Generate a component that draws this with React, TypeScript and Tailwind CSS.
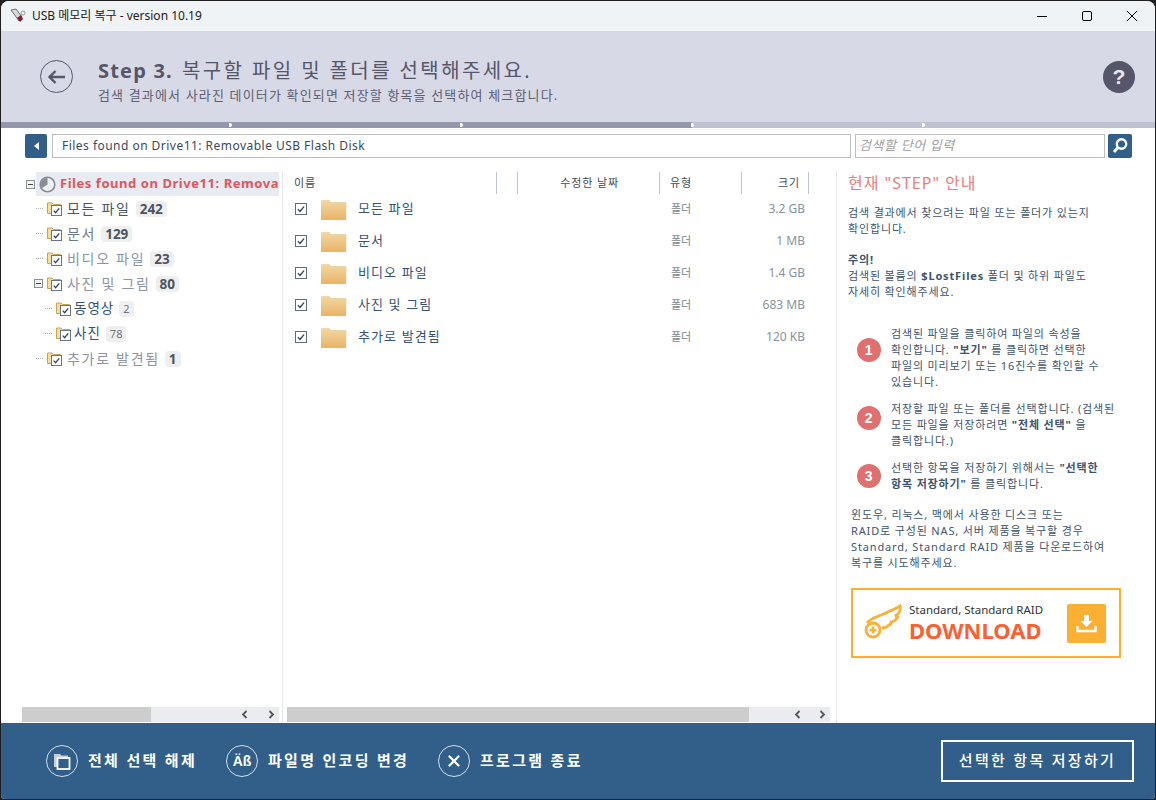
import { X } from "lucide-react";

const sans = "font-['Noto_Sans','Noto_Sans_CJK_KR',sans-serif]";

const treeRows = [
  { name: "모든 파일", count: "242", depth: 0, tone: "text-[#4b5563]" },
  { name: "문서", count: "129", depth: 0, tone: "text-[#6b7a8d]" },
  { name: "비디오 파일", count: "23", depth: 0, tone: "text-[#8795ab]" },
  { name: "사진 및 그림", count: "80", depth: 0, tone: "text-[#8d94a3]", open: true },
  { name: "동영상", count: "2", depth: 1, tone: "text-[#34527a]" },
  { name: "사진", count: "78", depth: 1, tone: "text-[#34527a]" },
  { name: "추가로 발견됨", count: "1", depth: 0, tone: "text-[#8d94a3]" },
];

const fileRows = [
  { name: "모든 파일", size: "3.2 GB" },
  { name: "문서", size: "1 MB" },
  { name: "비디오 파일", size: "1.4 GB" },
  { name: "사진 및 그림", size: "683 MB" },
  { name: "추가로 발견됨", size: "120 KB" },
];

function CheckBox({ size = 12 }: { size?: number }) {
  return (
    <svg width={size} height={size} viewBox="0 0 12 12" className="shrink-0">
      <rect x="0.5" y="0.5" width="11" height="11" fill="#fff" stroke="#5b6b80" />
      <path d="M3 6.2 L5 8.4 L9 3.6" fill="none" stroke="#2f4564" strokeWidth="1.4" />
    </svg>
  );
}

function TreeIcon() {
  return (
    <div className="relative w-[15px] h-[15px] shrink-0">
      <svg width="14" height="13" viewBox="0 0 14 13">
        <path d="M0.5 2 H5 L6.5 3.5 H13.5 V12.5 H0.5 Z" fill="#f6dc9f" stroke="#c9a25a" />
      </svg>
      <div className="absolute left-[4px] top-[4px] bg-white">
        <CheckBox size={11} />
      </div>
    </div>
  );
}

function BigFolder() {
  return (
    <svg width="27" height="21" viewBox="0 0 27 21" className="shrink-0">
      <defs>
        <linearGradient id="fld" x1="0" y1="0" x2="0" y2="1">
          <stop offset="0" stopColor="#f2d7a6" />
          <stop offset="1" stopColor="#e6b665" />
        </linearGradient>
      </defs>
      <path d="M1 2 Q1 1 2 1 H9 L11 3 H25 Q26 3 26.500 4 L26 21 H1 Z" fill="url(#fld)" />
    </svg>
  );
}

function Expander() {
  return (
    <div className="w-[9px] h-[9px] border border-[#8a8f98] bg-[#f2f2f2] flex items-center justify-center shrink-0">
      <div className="w-[5px] h-px bg-[#444]" />
    </div>
  );
}

function Badge({ n, small }: { n: string; small: boolean }) {
  return (
    <span
      className={`ml-[5px] rounded-[4px] bg-[#efefef] px-[4px] leading-[16px] ${
        small ? "text-[11px] text-[#6b7280]" : "text-[13.5px] font-bold text-[#4b5563]"
      }`}
    >
      {n}
    </span>
  );
}

function CircleBtn({ children, label, width }: { children: React.ReactNode; label: string; width: string }) {
  return (
    <div className={`flex items-center gap-[10px] ${width}`}>
      <div className="w-[32px] h-[32px] rounded-full border border-[#d5dee8] flex items-center justify-center shrink-0">
        {children}
      </div>
      <span className="pb-[2px] text-[15px] font-semibold text-white tracking-[2.3px] whitespace-nowrap">{label}</span>
    </div>
  );
}

function Num({ n, top }: { n: string; top: string }) {
  return (
    <div className={`w-[24px] h-[24px] rounded-full bg-[#e07070] text-white text-[14px] font-bold flex items-center justify-center shrink-0 font-['Liberation_Sans',sans-serif] ${top}`}>
      {n}
    </div>
  );
}

function Chev({ dir }: { dir: "l" | "r" }) {
  return (
    <svg width="7" height="9" viewBox="0 0 7 9">
      <path d={dir === "l" ? "M5.500 1 L2 4.500 L5.500 8" : "M1.500 1 L5 4.500 L1.500 8"} fill="none" stroke="#555" strokeWidth="1.800" />
    </svg>
  );
}

function ScrollBar({ thumb, gap }: { thumb: string; gap: string }) {
  return (
    <div className="h-[15px] mb-px bg-[#ebecef] flex items-center shrink-0">
      <div className={`h-full bg-[#cdcdcd] ${thumb}`} />
      <div className="flex-1" />
      <div className={`flex items-center pr-[4px] ${gap}`}>
        <Chev dir="l" />
        <Chev dir="r" />
      </div>
    </div>
  );
}

export default function App() {
  return (
    <div className={`w-[1156px] h-[800px] bg-[#202020] p-px overflow-hidden ${sans}`}>
      <div className="w-full h-full rounded-t-[8px] rounded-b-[4px] overflow-hidden bg-white flex flex-col">
        {/* title bar */}
        <div className="h-[30px] bg-[#eff3f6] flex items-center shrink-0">
          <svg width="16" height="16" viewBox="0 0 16 16" className="ml-[9px]">
            <path d="M1 2 L6 1 L12 9 L9 13 Z" fill="#d8d8d8" stroke="#555" strokeWidth="0.800" />
            <path d="M7 10 L11 7 L13 11 L10 14 Z" fill="#8a1c2c" />
            <circle cx="13" cy="5" r="2" fill="none" stroke="#999" />
          </svg>
          <span className="ml-[6px] text-[12px] text-[#222] whitespace-nowrap">USB 메모리 복구 - version 10.19</span>
          <div className="flex-1" />
          <svg width="10" height="10" viewBox="0 0 10 10" className="mr-[35px]">
            <path d="M0 5.500 H10" stroke="#000" strokeWidth="1" />
          </svg>
          <svg width="10" height="10" viewBox="0 0 10 10" className="mr-[35px]">
            <rect x="0.5" y="0.5" width="9" height="9" rx="1.500" fill="none" stroke="#000" />
          </svg>
          <svg width="10" height="10" viewBox="0 0 10 10" className="mr-[18px]">
            <path d="M0 0 L10 10 M10 0 L0 10" stroke="#000" strokeWidth="1" />
          </svg>
        </div>

        {/* step header */}
        <div className="h-[91px] bg-[#d7d9e6] flex items-center pl-[39px] pr-[20px] shrink-0">
          <div className="w-[33px] h-[33px] rounded-full border border-[#55566a] flex items-center justify-center shrink-0">
            <svg width="20" height="16" viewBox="0 0 20 16">
              <path d="M18 8 H3 M8.500 2 L2.500 8 L8.500 14" fill="none" stroke="#55566a" strokeWidth="2.400" />
            </svg>
          </div>
          <div className="ml-[25px] flex-1 pt-[8px]">
            <div className="text-[20px] leading-[26px] text-[#55566a] whitespace-nowrap">
              <span className="font-bold tracking-[1.2px] mr-[9px]">Step 3.</span>
              <span className="tracking-[2.4px]">복구할 파일 및 폴더를 선택해주세요.</span>
            </div>
            <div className="mt-[2px] text-[13px] leading-[18px] text-[#5e6072] tracking-[1.15px] whitespace-nowrap">
              검색 결과에서 사라진 데이터가 확인되면 저장할 항목을 선택하여 체크합니다.
            </div>
          </div>
          <div className="w-[32px] h-[32px] rounded-full bg-[#55566a] text-[#e8e9f0] text-[21px] font-bold flex items-center justify-center font-['Liberation_Sans',sans-serif]">
            ?
          </div>
        </div>

        {/* progress */}
        <div className="relative h-[6px] flex shrink-0">
          <div className="w-[691px] bg-[#9496ae]" />
          <div className="flex-1 bg-[#c0c2d4]" />
          {/* step separators */}
          <span className="absolute left-[228px] top-[1px] w-[3px] h-[4px] bg-white rounded-r-full" />
          <span className="absolute left-[459px] top-[1px] w-[3px] h-[4px] bg-white rounded-r-full" />
          <span className="absolute left-[690px] top-[1px] w-[3px] h-[4px] bg-white rounded-r-full" />
          <span className="absolute left-[921px] top-[1px] w-[3px] h-[4px] bg-white rounded-r-full" />
        </div>

        {/* path bar */}
        <div className="h-[24px] mt-[6px] flex items-stretch pl-[24px] shrink-0">
          <div className="w-[22px] rounded-[2px] bg-[#315f8a] flex items-center justify-center">
            <div className="w-0 h-0 border-y-[4px] border-y-transparent border-r-[5px] border-r-white" />
          </div>
          <div className="ml-[5px] w-[799px] border border-[#bdbdbd] flex items-center pl-[9px] text-[12px] text-[#3c4a5c] tracking-[0.47px] whitespace-nowrap">
            Files found on Drive11: Removable USB Flash Disk
          </div>
          <div className="ml-[4px] w-[250px] border border-[#bdbdbd] flex items-center pl-[3px] text-[13px] italic text-[#a0a0a0] tracking-[0.6px] whitespace-nowrap">
            검색할 단어 입력
          </div>
          <div className="ml-[3px] w-[24px] rounded-[2px] bg-[#315f8a] flex items-center justify-center">
            <svg width="18" height="18" viewBox="0 0 18 18">
              <circle cx="10.500" cy="7" r="4.700" fill="none" stroke="#fff" strokeWidth="2.400" />
              <path d="M7 10.500 L3 15" stroke="#fff" strokeWidth="3" />
            </svg>
          </div>
        </div>

        {/* main */}
        <div className="flex-1 flex min-h-0 mt-[13px]">
          {/* tree */}
          <div className="w-[282px] border-r border-[#e6e6e6] pl-[21px] pr-[3px] flex flex-col shrink-0">
            <div className="flex-1 min-h-0 overflow-hidden">
              <div className="flex items-center h-[24px] mt-[1px]">
                <div className="ml-[4px]"><Expander /></div>
                <div className="ml-[1px] flex-1 min-w-0 h-full bg-[#e8ebf2] flex items-center overflow-hidden pl-[3px]">
                  <svg width="17" height="17" viewBox="0 0 17 17" className="shrink-0">
                    <circle cx="8.500" cy="8.500" r="7.300" fill="#eef0f5" stroke="#888b94" strokeWidth="1.600" />
                    <path d="M8.500 8.500 V2 A6.500 6.500 0 0 0 3 12 Z" fill="#888b94" />
                  </svg>
                  <span className="ml-[4px] text-[13px] font-bold text-[#e0565e] tracking-[0.55px] whitespace-nowrap">
                    Files found on Drive11: Removable USB Flash Disk
                  </span>
                </div>
              </div>
              {treeRows.map((r) => (
                <div key={r.name} className={`h-[25px] flex items-center ${r.depth ? "pl-[21px]" : "pl-[12px]"}`}>
                  {r.open ? (
                    <Expander />
                  ) : (
                    <div className="w-[9px] flex justify-end shrink-0">
                      <div className="w-[7px] border-t border-dotted border-[#b4b4b4]" />
                    </div>
                  )}
                  <div className="ml-[4px]"><TreeIcon /></div>
                  <span className={`whitespace-nowrap ${r.tone} ${r.depth ? "ml-[3px] text-[13.5px] tracking-[1px]" : "ml-[5px] text-[14px] tracking-[1.7px]"}`}>
                    {r.name}
                  </span>
                  <Badge n={r.count} small={r.depth === 1} />
                </div>
              ))}
            </div>
            <ScrollBar thumb="w-[129px]" gap="gap-[20px]" />
          </div>

          {/* file list */}
          <div className="w-[554px] pl-[4px] pr-[6px] flex flex-col border-r border-[#e6e6e6] shrink-0">
            <div className="flex-1 min-h-0">
              <div className="h-[22px] mt-[1px] flex items-center text-[11px] text-[#3c4a5c] tracking-[0.9px]">
                <div className="w-[210px] pl-[7px] h-full flex items-center border-r border-[#bfc2d0]">이름</div>
                <div className="w-[21px] h-full border-r border-[#bfc2d0]" />
                <div className="w-[142px] h-full pr-[40px] flex items-center justify-end border-r border-[#bfc2d0]">수정한 날짜</div>
                <div className="w-[82px] h-full pl-[10px] flex items-center border-r border-[#bfc2d0]">유형</div>
                <div className="w-[67px] h-full pr-[8px] flex items-center justify-end border-r border-[#bfc2d0]">크기</div>
              </div>
              <div className="-mt-px">
                {fileRows.map((f) => (
                  <div key={f.name} className="h-[32px] flex items-center">
                    <div className="ml-[8px]"><CheckBox /></div>
                    <div className="ml-[13px]"><BigFolder /></div>
                    <span className="ml-[11px] w-[313px] text-[13px] text-[#34527a] tracking-[1.1px] whitespace-nowrap">{f.name}</span>
                    <span className="w-[50px] text-[11px] text-[#7c8591]">폴더</span>
                    <span className="w-[84px] text-right text-[12px] text-[#8a929c]">{f.size}</span>
                  </div>
                ))}
              </div>
            </div>
            <ScrollBar thumb="w-[462px]" gap="gap-[18px]" />
          </div>

          {/* guide */}
          <div className="flex-1 pl-[11px] pr-[10px] text-[11px] leading-[16px] text-[#3e5470] tracking-[0.85px] whitespace-nowrap">
            <div className="mt-[1px] text-[16px] leading-[22px] text-[#e98080] tracking-[1px]">현재 "STEP" 안내</div>
            <p className="mt-[11px]">
              검색 결과에서 찾으려는 파일 또는 폴더가 있는지
              <br />
              확인합니다.
            </p>
            <p className="mt-[15px]">
              <b>주의!</b>
              <br />
              검색된 볼륨의 <b>$LostFiles</b> 폴더 및 하위 파일도
              <br />
              자세히 확인해주세요.
            </p>

            <div className="mt-[26px] pl-[9px] flex flex-col gap-[11px]">
              <div className="flex items-start gap-[10px]">
                <Num n="1" top="mt-[12px]" />
                <p>
                  검색된 파일을 클릭하여 파일의 속성을
                  <br />
                  확인합니다. <b>"보기"</b> 를 클릭하면 선택한
                  <br />
                  파일의 미리보기 또는 16진수를 확인할 수
                  <br />
                  있습니다.
                </p>
              </div>
              <div className="flex items-start gap-[10px]">
                <Num n="2" top="mt-[5px]" />
                <p>
                  저장할 파일 또는 폴더를 선택합니다. (검색된
                  <br />
                  모든 파일을 저장하려면 <b>"전체 선택"</b> 을
                  <br />
                  클릭합니다.)
                </p>
              </div>
              <div className="flex items-start gap-[10px]">
                <Num n="3" top="mt-[4px]" />
                <p>
                  선택한 항목을 저장하기 위해서는 <b>"선택한</b>
                  <br />
                  <b>항목 저장하기"</b> 를 클릭합니다.
                </p>
              </div>
            </div>

            <p className="mt-[15px] pl-[3px]">
              윈도우, 리눅스, 맥에서 사용한 디스크 또는
              <br />
              RAID로 구성된 NAS, 서버 제품을 복구할 경우
              <br />
              Standard, Standard RAID 제품을 다운로드하여
              <br />
              복구를 시도해주세요.
            </p>

            {/* download banner */}
            <div className="mt-[17px] ml-[3px] w-[270px] h-[70px] border-2 border-[#fcb033] flex items-center pl-[11px] tracking-normal">
              <svg width="38" height="38" viewBox="0 0 38 38" className="shrink-0">
                <circle cx="9" cy="26" r="7" fill="none" stroke="#fcb033" strokeWidth="2.800" />
                <path d="M5.500 26 H12.500 M9 22.500 V29.500" stroke="#fcb033" strokeWidth="2.600" />
                <path d="M3 19 C9 12 20 11 26 7 C30 5 33 4 36 2 C37 6 35 10 31 12 C34 12 34 13 33 14 C31 17 29 18 26 18 C28 19 27 20 25 21 C23 23 20 24 18 24" fill="none" stroke="#fcb033" strokeWidth="2.800" />
              </svg>
              <div className="ml-[7px] w-[158px]">
                <div className="text-[11.5px] leading-[14px] text-[#333] whitespace-nowrap">Standard, Standard RAID</div>
                <div className="text-[22px] leading-[26px] font-bold text-[#fe5f2f] whitespace-nowrap">DOWNLOAD</div>
              </div>
              <div className="w-[39px] h-[39px] rounded-[2px] bg-[#fcb033] flex items-center justify-center shrink-0">
                <svg width="21" height="21" viewBox="0 0 21 21">
                  <path d="M8 2 H13 V8 H16.500 L10.500 14 L4.500 8 H8 Z" fill="#fff" />
                  <path d="M1.500 13 V18 H19.500 V13" fill="none" stroke="#fff" strokeWidth="2.400" />
                </svg>
              </div>
            </div>
          </div>
        </div>

        {/* footer */}
        <div className="h-[76px] bg-[#315f8a] flex items-center pl-[45px] pr-[21px] shrink-0">
          <CircleBtn label="전체 선택 해제" width="w-[180px]">
            <svg width="22" height="22" viewBox="0 0 22 22">
              <path d="M3 17 V4 H9 L10.500 5.500 H17 V7 H6 V17 Z" fill="#c3d0dc" />
              <rect x="6.500" y="8" width="12" height="11" fill="none" stroke="#fff" strokeWidth="1.800" />
            </svg>
          </CircleBtn>
          <CircleBtn label="파일명 인코딩 변경" width="w-[212px]">
            <span className="text-[14px] font-bold text-white font-['Liberation_Sans',sans-serif]">Äß</span>
          </CircleBtn>
          <CircleBtn label="프로그램 종료" width="w-[160px]">
            <X size={18} strokeWidth={3} className="text-white" />
          </CircleBtn>
          <div className="flex-1" />
          <div className="w-[193px] h-[42px] border-2 border-white flex items-center justify-center pb-[2px] text-[15px] font-medium text-white tracking-[2.3px] whitespace-nowrap">
            선택한 항목 저장하기
          </div>
        </div>
      </div>
    </div>
  );
}
